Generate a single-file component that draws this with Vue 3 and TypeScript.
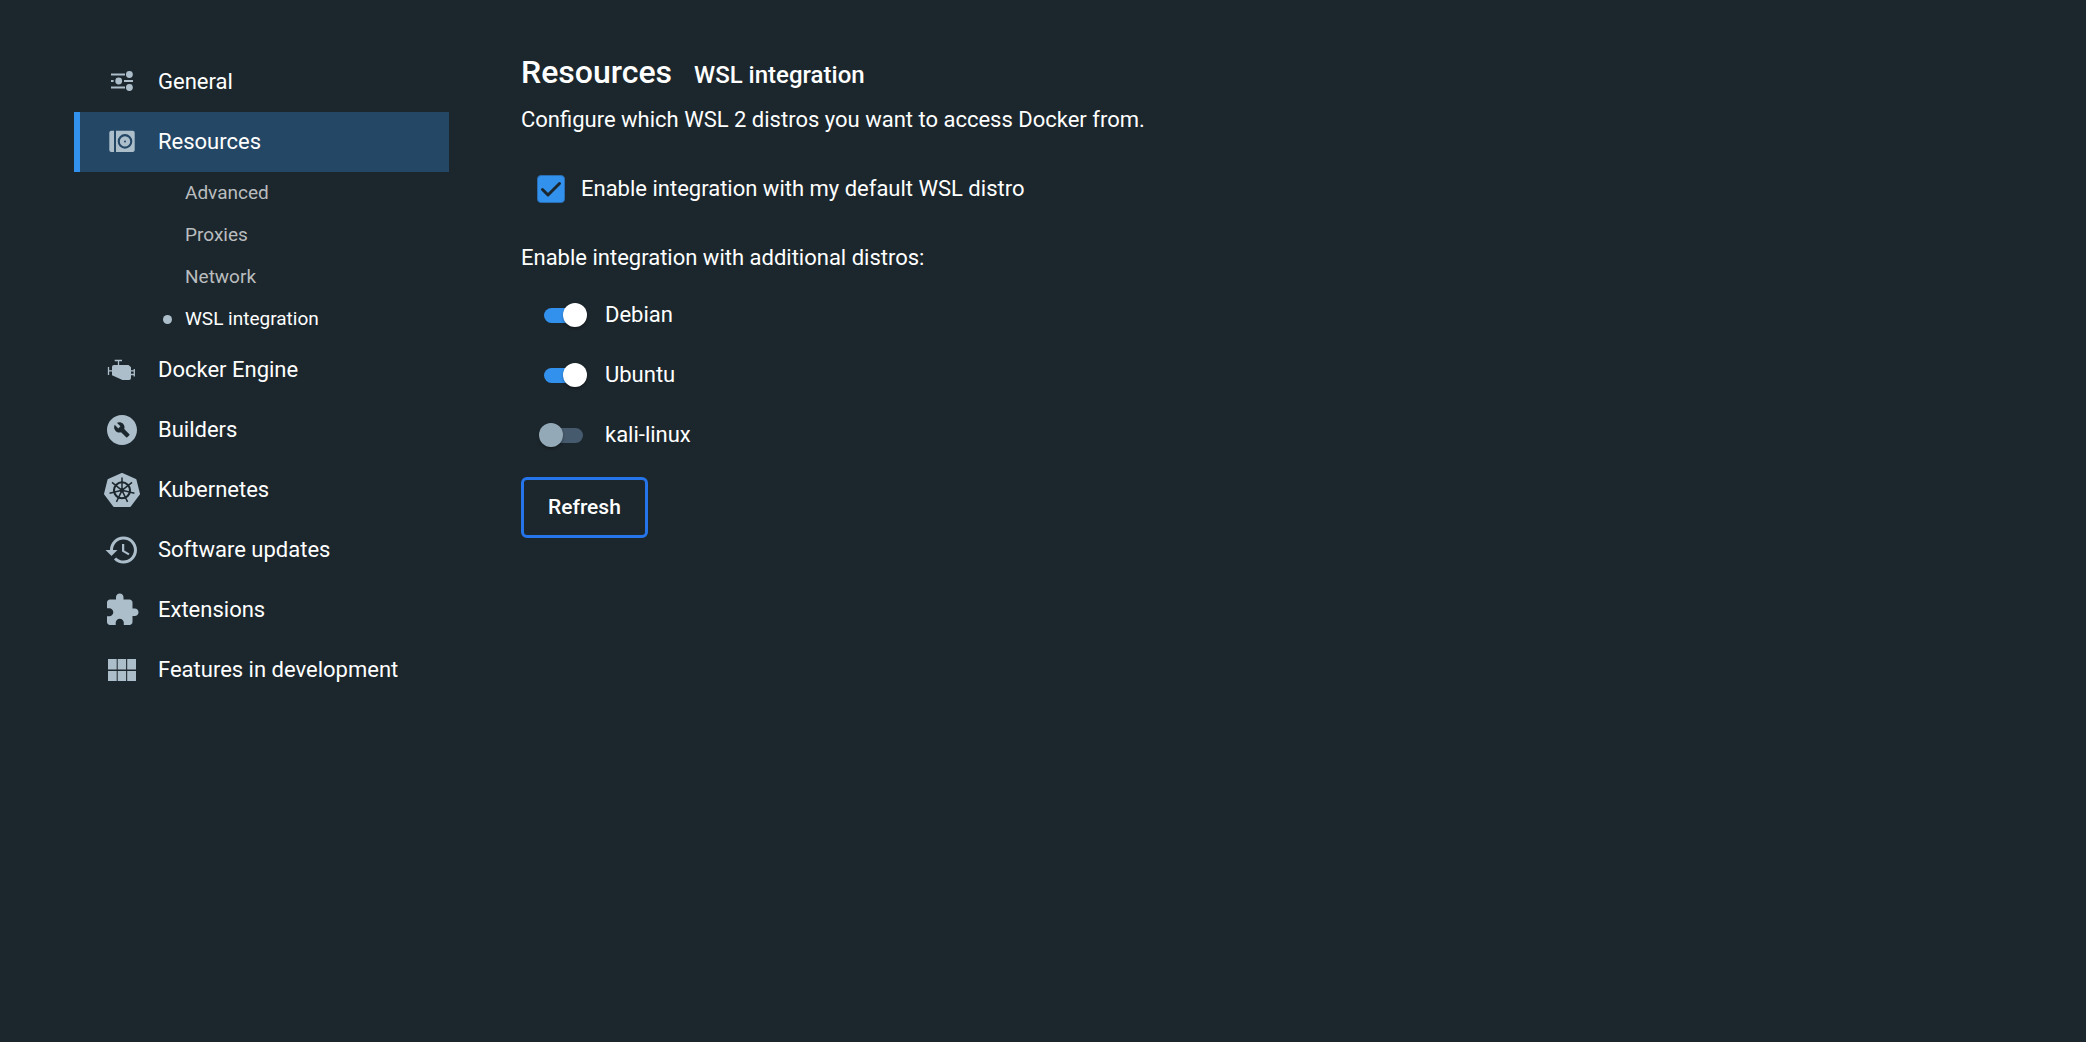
<script setup lang="ts">
import { ref } from 'vue'

type IconName =
  | 'general'
  | 'resources'
  | 'engine'
  | 'builders'
  | 'kubernetes'
  | 'updates'
  | 'extensions'
  | 'features'

interface NavItem {
  label: string
  icon: IconName
  children?: string[]
}

interface Distro {
  name: string
  enabled: boolean
}

const navItems: NavItem[] = [
  { label: 'General', icon: 'general' },
  {
    label: 'Resources',
    icon: 'resources',
    children: ['Advanced', 'Proxies', 'Network', 'WSL integration'],
  },
  { label: 'Docker Engine', icon: 'engine' },
  { label: 'Builders', icon: 'builders' },
  { label: 'Kubernetes', icon: 'kubernetes' },
  { label: 'Software updates', icon: 'updates' },
  { label: 'Extensions', icon: 'extensions' },
  { label: 'Features in development', icon: 'features' },
]

const activeItem = ref('Resources')
const activeChild = ref('WSL integration')
const useDefaultDistro = ref(true)
const distros = ref<Distro[]>([
  { name: 'Debian', enabled: true },
  { name: 'Ubuntu', enabled: true },
  { name: 'kali-linux', enabled: false },
])

// The helm has seven evenly spaced spokes.
const spokes = Array.from({ length: 7 }, (_, i) => (i * 360) / 7)
</script>

<template>
  <div class="settings">
    <nav class="sidebar" aria-label="Settings">
      <ul class="nav-list">
        <li v-for="item in navItems" :key="item.label">
          <a
            href="#"
            class="nav-item"
            :class="{ active: item.label === activeItem }"
            @click.prevent="activeItem = item.label"
          >
            <svg v-if="item.icon === 'general'" class="icon" viewBox="0 0 36 36" aria-hidden="true">
              <path d="M7 10.5h14M7 17h2.6M20 17h9M7 23.5h14" fill="none" stroke="currentColor" stroke-width="2.2" />
              <circle cx="25.4" cy="10.5" r="3.4" />
              <circle cx="14.7" cy="17" r="3.4" />
              <circle cx="25.4" cy="23.5" r="3.4" />
            </svg>
            <svg v-else-if="item.icon === 'resources'" class="icon" viewBox="0 0 36 36" aria-hidden="true">
              <path d="M10 6.8v21.2H7.3a2 2 0 0 1-2-2V8.8a2 2 0 0 1 2-2z" />
              <path
                fill-rule="evenodd"
                d="M12 6.8h16.7a2 2 0 0 1 2 2V26a2 2 0 0 1-2 2H12zM21 10.1a7.3 7.3 0 1 0 0 14.6a7.3 7.3 0 1 0 0-14.6zM21 12.2a5.2 5.2 0 1 1 0 10.4a5.2 5.2 0 1 1 0-10.4zM21 16.4a1 1 0 1 0 0 2a1 1 0 1 0 0-2z"
              />
            </svg>
            <svg v-else-if="item.icon === 'engine'" class="icon" viewBox="0 0 36 36" aria-hidden="true">
              <path d="M10 13h14.5l2.5 2.3V26a2 2 0 0 1-2 2h-6.5L8 23.3V15a2 2 0 0 1 2-2z" />
              <path
                d="M10.7 8.5h7.3M14.5 8.5v5M4.5 15v8M4.5 18.8h4M30.3 17v7.5M26.5 18.8h4M26.5 22.5h4"
                fill="none"
                stroke="currentColor"
                stroke-width="1.3"
              />
            </svg>
            <svg v-else-if="item.icon === 'builders'" class="icon" viewBox="0 0 24 24" aria-hidden="true">
              <path
                d="M12 2C6.48 2 2 6.48 2 12s4.48 10 10 10 10-4.48 10-10S17.52 2 12 2zm4.9 13.49-1.4 1.4c-.2.2-.51.2-.71 0l-3.41-3.41c-1.22.43-2.64.17-3.62-.81-1.11-1.11-1.3-2.79-.59-4.1l2.35 2.35 1.41-1.41-2.35-2.34c1.32-.71 2.99-.52 4.1.59.98.98 1.24 2.4.81 3.62l3.41 3.41c.19.19.19.51 0 .7z"
              />
            </svg>
            <svg v-else-if="item.icon === 'kubernetes'" class="icon" viewBox="0 0 36 36" aria-hidden="true">
              <path
                d="M18 2 31.5 8 35 22 26 34H10L1 22 4.5 8z"
                stroke="currentColor"
                stroke-width="2"
                stroke-linejoin="round"
              />
              <g class="helm">
                <circle cx="18" cy="18.3" r="8" fill="none" stroke-width="2.1" />
                <g v-for="angle in spokes" :key="angle" :transform="`rotate(${angle} 18 18.3)`">
                  <path d="M18 18.3V5.5" stroke-width="1.5" />
                </g>
                <circle cx="18" cy="18.3" r="2.2" class="hub" />
              </g>
            </svg>
            <svg v-else-if="item.icon === 'updates'" class="icon" viewBox="0 0 24 24" aria-hidden="true">
              <path
                d="M13 3c-4.97 0-9 4.03-9 9H1l3.89 3.89.07.14L9 12H6c0-3.87 3.13-7 7-7s7 3.13 7 7-3.13 7-7 7c-1.93 0-3.68-.79-4.94-2.06l-1.42 1.42C8.27 19.99 10.51 21 13 21c4.97 0 9-4.03 9-9s-4.03-9-9-9zm-1 5v5l4.28 2.54.72-1.21-3.5-2.08V8H12z"
              />
            </svg>
            <svg v-else-if="item.icon === 'extensions'" class="icon" viewBox="0 0 24 24" aria-hidden="true">
              <path
                d="M20.5 11H19V7c0-1.1-.9-2-2-2h-4V3.5C13 2.12 11.88 1 10.5 1S8 2.12 8 3.5V5H4c-1.1 0-1.99.9-1.99 2v3.8H3.5c1.49 0 2.7 1.21 2.7 2.7s-1.21 2.7-2.7 2.7H2V20c0 1.1.9 2 2 2h3.8v-1.5c0-1.49 1.21-2.7 2.7-2.7 1.49 0 2.7 1.21 2.7 2.7V22H17c1.1 0 2-.9 2-2v-4h1.5c1.38 0 2.5-1.12 2.5-2.5S21.88 11 20.5 11z"
              />
            </svg>
            <svg v-else class="icon" viewBox="0 0 36 36" aria-hidden="true">
              <path
                d="M4 7h8.7v10.5H4zM13.7 7h8.4v10.5h-8.4zM23.2 7H32v10.5h-8.8zM4 19h8.7v10H4zM13.7 19h8.4v10h-8.4zM23.2 19H32v10h-8.8z"
              />
            </svg>
            <span>{{ item.label }}</span>
          </a>
          <ul v-if="item.children" class="sub-list">
            <li v-for="child in item.children" :key="child">
              <a
                href="#"
                class="sub-item"
                :class="{ current: child === activeChild }"
                @click.prevent="activeChild = child"
              >
                <span class="dot"></span>
                <span>{{ child }}</span>
              </a>
            </li>
          </ul>
        </li>
      </ul>
    </nav>

    <main class="content">
      <header class="heading">
        <h1>Resources</h1>
        <h2>WSL integration</h2>
      </header>
      <p class="description">Configure which WSL 2 distros you want to access Docker from.</p>

      <label class="check-row">
        <span class="check">
          <input v-model="useDefaultDistro" type="checkbox" />
          <svg v-if="useDefaultDistro" viewBox="0 0 28 28" aria-hidden="true">
            <path d="M5.5 14.5 11 20 22.5 8.5" />
          </svg>
        </span>
        <span>Enable integration with my default WSL distro</span>
      </label>

      <section class="distros" aria-labelledby="distros-title">
        <p id="distros-title" class="distros-title">Enable integration with additional distros:</p>
        <label v-for="distro in distros" :key="distro.name" class="switch-row">
          <input v-model="distro.enabled" type="checkbox" role="switch" class="switch" />
          <span>{{ distro.name }}</span>
        </label>
      </section>

      <button type="button" class="refresh">Refresh</button>
    </main>
  </div>
</template>

<style>
body {
  background: #1c272d;
}
</style>

<style scoped>
.settings {
  display: flex;
  gap: 72px;
  box-sizing: border-box;
  min-height: 100vh;
  padding: 52px 74px;
  background: #1c272d;
  color: #ffffff;
  font-family: Roboto, "Liberation Sans", sans-serif;
  font-size: 22px;
  line-height: 30px;
}

.sidebar {
  flex: 0 0 375px;
}

.nav-list,
.sub-list {
  margin: 0;
  padding: 0;
  list-style: none;
}

.nav-item {
  display: flex;
  align-items: center;
  gap: 18px;
  box-sizing: border-box;
  height: 60px;
  padding: 0 24px;
  border-left: 6px solid transparent;
  color: inherit;
  text-decoration: none;
}

.nav-item.active {
  border-left-color: #3391ee;
  background: #244766;
}

.icon {
  flex: none;
  width: 36px;
  height: 36px;
  color: #adbecb;
  fill: currentColor;
}

.helm {
  fill: none;
  stroke: #1c272d;
}

.helm .hub {
  fill: #1c272d;
  stroke: none;
}

.sub-item {
  display: flex;
  align-items: center;
  gap: 13px;
  height: 42px;
  padding-left: 89px;
  color: #babdbf;
  font-size: 19px;
  line-height: 28px;
  text-decoration: none;
}

.sub-item.current {
  color: #ffffff;
}

.dot {
  width: 9px;
  height: 9px;
  border-radius: 50%;
}

.current .dot {
  background: #adbecb;
}

.content {
  display: flex;
  flex: 1;
  flex-direction: column;
  align-items: flex-start;
  min-width: 0;
}

.heading {
  display: flex;
  align-items: baseline;
  gap: 22px;
}

.heading h1,
.heading h2 {
  margin: 0;
  font-weight: 500;
  line-height: 40px;
}

.heading h1 {
  font-size: 32px;
}

.heading h2 {
  font-size: 24px;
}

.description {
  margin: 10px 0 0;
}

.check-row {
  display: flex;
  align-items: center;
  gap: 16px;
  margin-top: 39px;
  padding-left: 16px;
}

.check {
  position: relative;
  width: 28px;
  height: 28px;
}

.check input {
  display: block;
  box-sizing: border-box;
  width: 28px;
  height: 28px;
  margin: 0;
  border: 1px solid #2a6db2;
  border-radius: 4px;
  appearance: none;
}

.check input:checked {
  background: #3391ee;
}

.check svg {
  position: absolute;
  inset: 0;
  fill: none;
  stroke: #1c272d;
  stroke-width: 3;
  stroke-linecap: round;
  stroke-linejoin: round;
  pointer-events: none;
}

.distros {
  margin-top: 39px;
}

.distros-title {
  margin: 0 0 12px;
}

.switch-row {
  display: flex;
  align-items: center;
  gap: 22px;
  height: 60px;
  padding-left: 18px;
}

.switch {
  position: relative;
  display: flex;
  align-items: center;
  width: 44px;
  height: 24px;
  margin: 0;
  appearance: none;
}

.switch::before {
  content: "";
  width: 39px;
  height: 15px;
  margin-left: 5px;
  border-radius: 8px;
  background: #465a6e;
}

.switch::after {
  content: "";
  position: absolute;
  left: 0;
  width: 24px;
  height: 24px;
  border-radius: 50%;
  background: #94a9b8;
  box-shadow: 0 2px 3px rgba(0, 0, 0, 0.3);
}

.switch:checked::before {
  background: #3391ee;
}

.switch:checked::after {
  left: 24px;
  background: #ffffff;
}

.refresh {
  margin: 12px 0 0;
  padding: 12px 24px;
  border: 3px solid #2574ea;
  border-radius: 6px;
  background: transparent;
  color: #ffffff;
  font-family: inherit;
  font-size: 21px;
  font-weight: 500;
  line-height: 31px;
}
</style>
